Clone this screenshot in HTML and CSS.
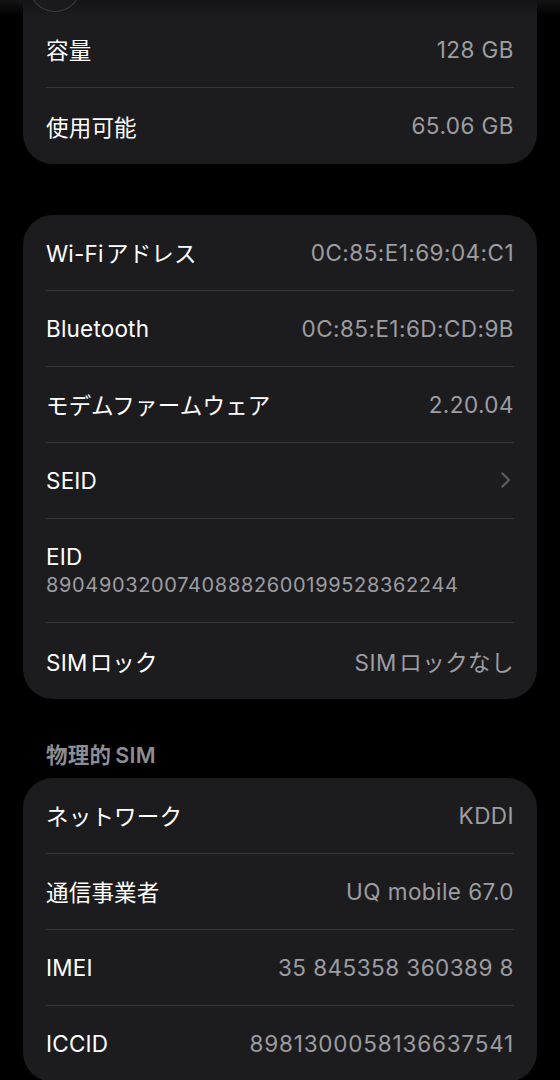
FILE: index.html
```html
<!DOCTYPE html>
<html lang="ja">
<head>
    <meta charset="utf-8">
    <title>情報</title>
    <link rel="stylesheet" href="styles.css">
</head>
<body>
    <div class="topbar">
        <span class="back-button"></span>
    </div>
    <main class="page">
        <section class="group group-first">
            <div class="row">
                <span class="label">容量</span>
                <span class="value">128 GB</span>
            </div>
            <div class="row">
                <span class="label">使用可能</span>
                <span class="value">65.06 GB</span>
            </div>
        </section>

        <section class="group">
            <div class="row">
                <span class="label">Wi-Fi&#8202;アドレス</span>
                <span class="value">0C:85:E1:69:04:C1</span>
            </div>
            <div class="row">
                <span class="label">Bluetooth</span>
                <span class="value">0C:85:E1:6D:CD:9B</span>
            </div>
            <div class="row">
                <span class="label">モデムファームウェア</span>
                <span class="value">2.20.04</span>
            </div>
            <div class="row">
                <span class="label">SEID</span>
                <svg class="chevron" width="12" height="18" viewBox="0 0 12 18">
                    <path d="M2.5 2.5 L9 9 L2.5 15.5" fill="none" stroke="#5b5b60" stroke-width="2.4" stroke-linecap="round" stroke-linejoin="round"/>
                </svg>
            </div>
            <div class="row row-stacked">
                <span class="label">EID</span>
                <span class="value value-long">89049032007408882600199528362244</span>
            </div>
            <div class="row">
                <span class="label">SIM&#8202;ロック</span>
                <span class="value">SIM&#8202;ロックなし</span>
            </div>
        </section>

        <h2 class="group-title">物理的&thinsp;SIM</h2>
        <section class="group group-last">
            <div class="row">
                <span class="label">ネットワーク</span>
                <span class="value">KDDI</span>
            </div>
            <div class="row">
                <span class="label">通信事業者</span>
                <span class="value">UQ mobile 67.0</span>
            </div>
            <div class="row">
                <span class="label">IMEI</span>
                <span class="value">35 845358 360389 8</span>
            </div>
            <div class="row">
                <span class="label">ICCID</span>
                <span class="value value-digits">8981300058136637541</span>
            </div>
        </section>
    </main>
</body>
</html>
```

FILE: styles.css
```css
/* Dark settings list, iPhone "About" screen style. */
body, html {
    margin: 0;
    padding: 0;
    background: #000;
    font-family: Inter, "Noto Sans CJK JP", sans-serif;
    color: #fff;
    overflow: hidden;
}

/* Blurred navigation strip at the very top. */
.topbar {
    position: absolute;
    top: 0;
    left: 0;
    right: 0;
    height: 16px;
    background: linear-gradient(#141416, rgba(28, 28, 30, 0));
    z-index: 2;
}
.back-button {
    position: absolute;
    left: 29px;
    top: -40px;
    width: 52px;
    height: 52px;
    border-radius: 50%;
    background: #1a1a1c;
    box-shadow: inset 0 0 0 1px #3c3c40;
}

.page {
    padding: 0 23px;
}

.group {
    background: #1c1c1e;
    border-radius: 30px;
    margin-bottom: 51px;
}
.group-first {
    margin-top: -30px;
    padding-top: 42px;
}
.group-last {
    margin-bottom: 0;
}

/* 74 + 1 padding + 1 border = 76px per row. */
.row {
    display: flex;
    justify-content: space-between;
    align-items: center;
    height: 74px;
    margin: 0 23px;
    padding-bottom: 1px;
    border-bottom: 1px solid #363638;
}
.row:last-child {
    border-bottom: none;
    height: 75px;
}
.row-stacked {
    flex-direction: column;
    align-items: flex-start;
    justify-content: center;
    height: 102px;
    gap: 3px;
}

.label {
    font-size: 22.5px;
    letter-spacing: 0.2px;
}
.value {
    font-size: 22.5px;
    letter-spacing: 0.45px;
    color: #9d9da2;
}
.value-digits {
    letter-spacing: 0.8px;
}
.value-long {
    font-size: 20px;
    letter-spacing: 0.65px;
}

.chevron {
    margin-right: 2px;
}

.group-title {
    margin: -7px 0 11px 23px;
    font-size: 21.5px;
    font-weight: 600;
    color: #8d8d92;
    line-height: 24px;
    letter-spacing: 0.3px;
}
```
